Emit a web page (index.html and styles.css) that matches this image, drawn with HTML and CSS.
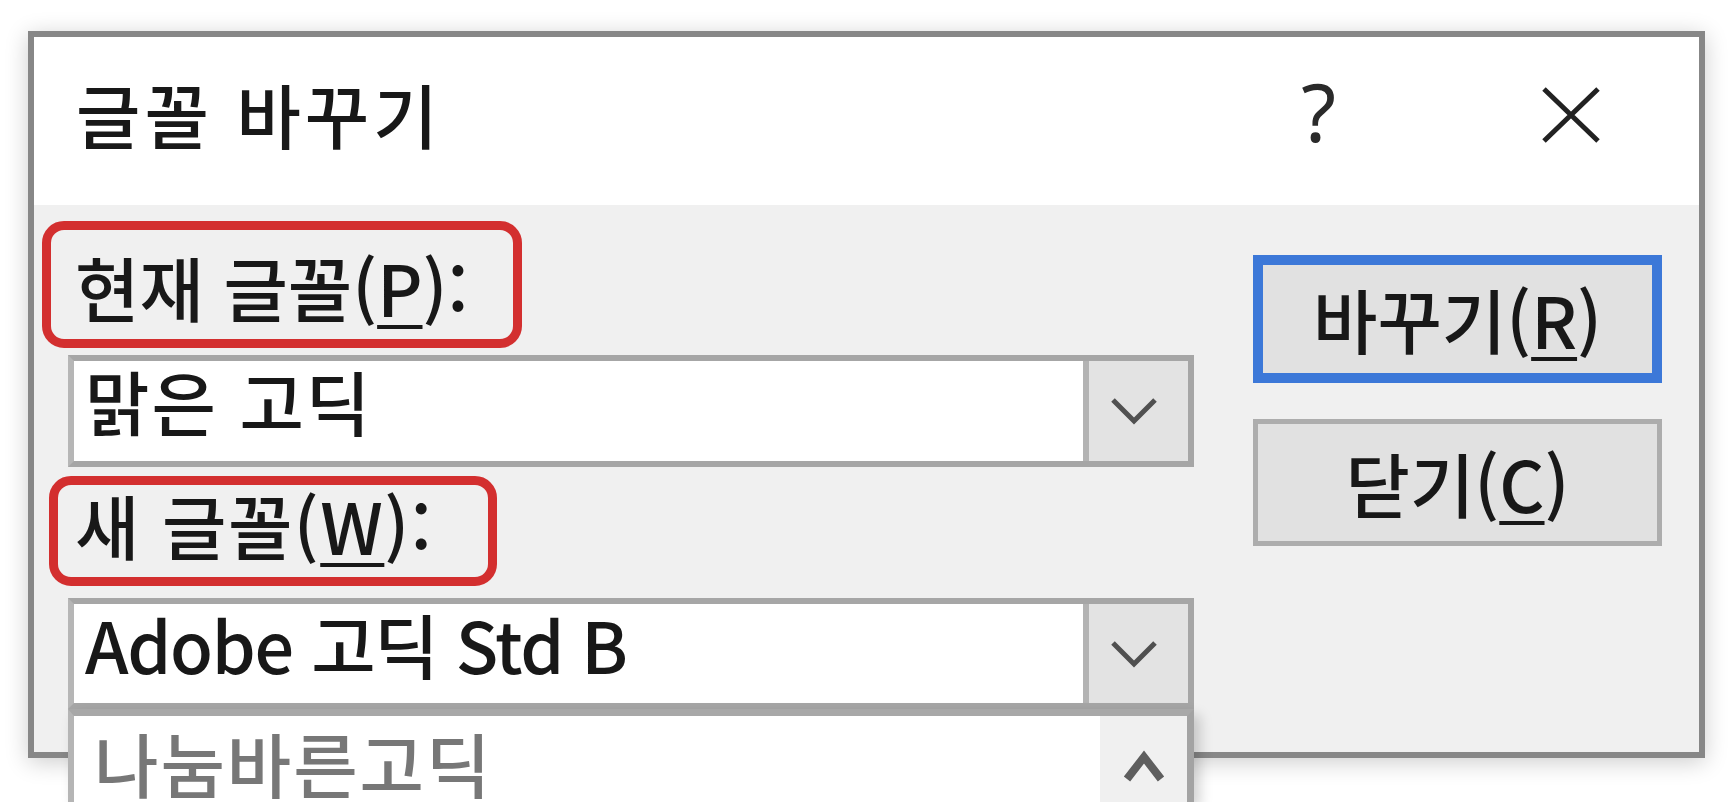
FILE: index.html
```html
<!DOCTYPE html>
<html lang="ko">
<head>
    <meta charset="UTF-8">
    <title>글꼴 바꾸기</title>
    <link rel="stylesheet" href="styles.css">
</head>
<body>

    <div class="dialog">
        <div class="titlebar">
            <span class="title">글꼴 바꾸기</span>
            <span class="help">?</span>
            <span class="close">
                <svg width="60" height="58" viewBox="0 0 60 58"><path d="M3 3 L57 55 M57 3 L3 55" stroke="#222" stroke-width="5" fill="none"/></svg>
            </span>
        </div>

        <div class="content">
            <div class="fields">
                <div class="mark mark-current">현재 글꼴(<u>P</u>):</div>
                <div class="combo combo-current">
                    <div class="combo-text wide">맑은 고딕</div>
                    <div class="combo-btn">
                        <svg width="48" height="28" viewBox="0 0 48 28"><polyline points="3,3 24,24 45,3" stroke="#505050" stroke-width="5" fill="none"/></svg>
                    </div>
                </div>

                <div class="mark mark-new">새 글꼴(<u>W</u>):</div>
                <div class="combo combo-new">
                    <div class="combo-text narrow">Adobe 고딕 Std B</div>
                    <div class="combo-btn">
                        <svg width="48" height="28" viewBox="0 0 48 28"><polyline points="3,3 24,24 45,3" stroke="#505050" stroke-width="5" fill="none"/></svg>
                    </div>

                    <div class="dropdown">
                        <div class="dropdown-item">나눔바른고딕</div>
                        <div class="dropdown-scroll">
                            <svg width="44" height="36" viewBox="0 0 44 36"><polyline points="5,31 22,9 39,31" stroke="#5e5e5e" stroke-width="8" fill="none"/></svg>
                        </div>
                    </div>
                </div>
            </div>

            <div class="actions">
                <button class="btn btn-default">바꾸기(<u>R</u>)</button>
                <button class="btn btn-close">닫기(<u>C</u>)</button>
            </div>
        </div>
    </div>

</body>
</html>
```

FILE: styles.css
```css
html, body {
    margin: 0;
    height: 100%;
    overflow: hidden;
}
body {
    background: #fff;
    font-family: "Noto Sans CJK KR", "Noto Sans", sans-serif;
    font-size: 70px;
    font-weight: 500;
    color: #181818;
}

.dialog {
    margin: 31px 0 0 28px;
    width: 1677px;
    height: 727px;
    box-sizing: border-box;
    border: 6px solid #878787;
    background: #f0f0f0;
    box-shadow: 0 4px 22px rgba(0, 0, 0, 0.2);
    display: flex;
    flex-direction: column;
}

/* title bar */
.titlebar {
    height: 168px;
    flex: none;
    background: #fff;
    display: flex;
    align-items: flex-start;
    padding: 44px 0 0 42px;
    box-sizing: border-box;
}
.title {
    line-height: 66px;
    letter-spacing: 4px;
}
.help {
    margin-left: auto;
    margin-top: -10px;
    margin-right: 205px;
    font-family: "Noto Sans", sans-serif;
    font-size: 80px;
    font-weight: 400;
    line-height: 80px;
    color: #2a2a2a;
}
.close {
    margin-top: 5px;
    margin-right: 98px;
    display: block;
    height: 58px;
}
.close svg {
    display: block;
}

/* body */
.content {
    flex: 1;
    display: flex;
}
.fields {
    width: 1161px;
    display: flex;
    flex-direction: column;
    align-items: flex-start;
}

.mark {
    box-sizing: border-box;
    border: 9px solid #d32f2f;
    border-radius: 22px;
    line-height: 66px;
    white-space: nowrap;
}
.mark-current {
    margin: 16px 0 0 8px;
    width: 480px;
    height: 127px;
    padding: 24px 0 0 24px;
}
.mark-new {
    margin: 9px 0 0 15px;
    width: 448px;
    height: 110px;
    padding: 7px 0 0 17px;
    letter-spacing: 1.5px;
}

u {
    text-decoration-thickness: 4px;
    text-underline-offset: 8px;
}

.combo {
    position: relative;
    margin: 7px 0 0 34px;
    width: 1126px;
    height: 112px;
    box-sizing: border-box;
    border: 6px solid #a6a6a6;
    border-left-color: #b6b6b6;
    background: #fff;
    display: flex;
}
.combo-new {
    margin-top: 12px;
    height: 111px;
}
.combo-text {
    flex: 1;
    padding: 7px 0 0 11px;
    line-height: 66px;
    white-space: nowrap;
}
.combo-text.wide {
    letter-spacing: 2px;
}
.combo-text.narrow {
    letter-spacing: -1.3px;
}
.combo-btn {
    width: 105px;
    box-sizing: border-box;
    border-left: 6px solid #b3b3b3;
    background: #e3e3e3;
    display: flex;
    align-items: center;
    justify-content: center;
    padding-right: 10px;
}
.combo-btn svg {
    display: block;
}

/* open list of the second combo, drawn over the dialog edge */
.dropdown {
    position: absolute;
    left: -6px;
    right: -6px;
    top: calc(100% + 6px);
    height: 93px;
    box-sizing: border-box;
    background: #fff;
    border-top: 7px solid #a8a8a8;
    border-left: 6px solid #b5b5b5;
    border-right: 7px solid #a3a3a3;
    box-shadow: 6px 6px 12px rgba(0, 0, 0, 0.18);
    display: flex;
    z-index: 2;
}
.dropdown-item {
    flex: 1;
    padding: 14px 0 0 20px;
    line-height: 66px;
    letter-spacing: 2px;
    color: #777;
}
.dropdown-scroll {
    width: 87px;
    background: #f0f0f0;
    display: flex;
    justify-content: center;
    padding-top: 32px;
    box-sizing: border-box;
}
.dropdown-scroll svg {
    display: block;
}

/* buttons */
.actions {
    margin-left: 58px;
    padding-top: 50px;
    display: flex;
    flex-direction: column;
    gap: 36px;
}
.btn {
    width: 409px;
    height: 127px;
    box-sizing: border-box;
    border: 5px solid #adadad;
    background: #e1e1e1;
    font-family: inherit;
    font-size: 70px;
    font-weight: 500;
    line-height: 66px;
    color: #181818;
    padding: 0;
    display: flex;
    align-items: center;
    justify-content: center;
}
.btn-default {
    height: 128px;
    border: 10px solid #3c78d8;
}
```
